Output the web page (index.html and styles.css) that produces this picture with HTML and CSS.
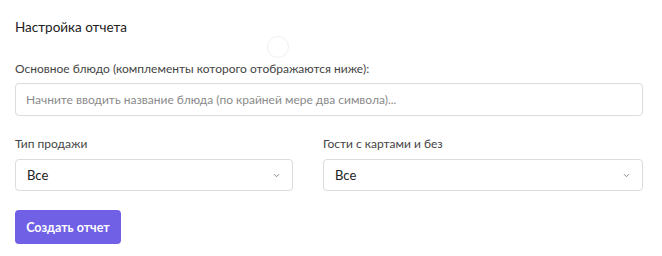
FILE: index.html
```html
<!DOCTYPE html>
<html lang="ru">
<head>
<meta charset="utf-8">
<link rel="stylesheet" href="styles.css">
</head>
<body>
<div class="panel">
  <h2 class="title">Настройка отчета</h2>
  <div class="spinner"></div>
  <div class="field">
    <label class="label">Основное блюдо (комплементы которого отображаются ниже):</label>
    <div class="input"><span class="placeholder">Начните вводить название блюда (по крайней мере два символа)...</span></div>
  </div>
  <div class="row">
    <div class="field">
      <label class="label">Тип продажи</label>
      <div class="select"><span>Все</span>
        <svg class="chev" width="7" height="5" viewBox="0 0 7 5"><path d="M1 1.2l2.5 2.5 2.5-2.5" fill="none" stroke="#888" stroke-width="1"/></svg>
      </div>
    </div>
    <div class="field">
      <label class="label">Гости с картами и без</label>
      <div class="select"><span>Все</span>
        <svg class="chev" width="7" height="5" viewBox="0 0 7 5"><path d="M1 1.2l2.5 2.5 2.5-2.5" fill="none" stroke="#888" stroke-width="1"/></svg>
      </div>
    </div>
  </div>
  <button class="btn">Создать отчет</button>
</div>
</body>
</html>
```

FILE: styles.css
```css
html, body { margin: 0; padding: 0; background: #fff; }
body { font-family: Lato, "Noto Sans", sans-serif; color: #333; }
.panel { position: relative; padding: 17px 19px 0 15px; width: 628px; }
.title { margin: 0; font-size: 13.5px; font-weight: 400; line-height: 20px; color: #222; }
.spinner { position: absolute; left: 267px; top: 36px; width: 20px; height: 20px; border: 1px solid #f1f1f1; border-radius: 50%; }
.field { display: flex; flex-direction: column; }
.panel > .field { margin-top: 24px; }
.label { font-size: 12px; line-height: 16px; color: #444; margin-bottom: 6px; }
.input { height: 31px; border: 1px solid #dcdcdc; border-radius: 4px; display: flex; align-items: center; padding-left: 10px; }
.placeholder { font-size: 12px; color: #8a8a8a; }
.row { display: grid; grid-template-columns: 278px 320px; column-gap: 30px; margin-top: 20px; }
.row .label { margin-bottom: 7px; }
.select { height: 30px; border: 1px solid #dcdcdc; border-radius: 4px; display: flex; align-items: center; justify-content: space-between; padding: 0 12px 0 11px; font-size: 13px; color: #222; }
.chev { display: block; }
.btn { margin-top: 19px; height: 34px; width: 106px; border: 0; border-radius: 4px; background: #6f60e6; color: #fff; font-family: inherit; font-size: 12.5px; font-weight: 700; padding: 0; cursor: pointer; }
```
